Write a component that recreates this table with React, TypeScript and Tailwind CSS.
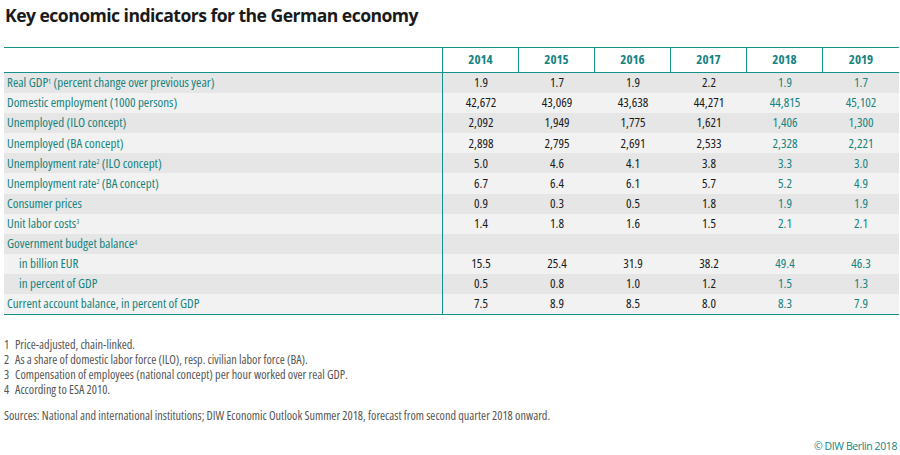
const rows: { label: React.ReactNode; values: string[]; indent?: boolean }[] = [
  { label: <>Real GDP<sup className="text-[7px]">1</sup> (percent change over previous year)</>, values: ['1.9', '1.7', '1.9', '2.2', '1.9', '1.7'] },
  { label: 'Domestic employment (1000 persons)', values: ['42,672', '43,069', '43,638', '44,271', '44,815', '45,102'] },
  { label: 'Unemployed (ILO concept)', values: ['2,092', '1,949', '1,775', '1,621', '1,406', '1,300'] },
  { label: 'Unemployed (BA concept)', values: ['2,898', '2,795', '2,691', '2,533', '2,328', '2,221'] },
  { label: <>Unemployment rate<sup className="text-[7px]">2</sup> (ILO concept)</>, values: ['5.0', '4.6', '4.1', '3.8', '3.3', '3.0'] },
  { label: <>Unemployment rate<sup className="text-[7px]">2</sup> (BA concept)</>, values: ['6.7', '6.4', '6.1', '5.7', '5.2', '4.9'] },
  { label: 'Consumer prices', values: ['0.9', '0.3', '0.5', '1.8', '1.9', '1.9'] },
  { label: <>Unit labor costs<sup className="text-[7px]">3</sup></>, values: ['1.4', '1.8', '1.6', '1.5', '2.1', '2.1'] },
  { label: <>Government budget balance<sup className="text-[7px]">4</sup></>, values: ['', '', '', '', '', ''] },
  { label: 'in billion EUR', values: ['15.5', '25.4', '31.9', '38.2', '49.4', '46.3'], indent: true },
  { label: 'in percent of GDP', values: ['0.5', '0.8', '1.0', '1.2', '1.5', '1.3'], indent: true },
  { label: 'Current account balance, in percent of GDP', values: ['7.5', '8.9', '8.5', '8.0', '8.3', '7.9'] },
];

const years = ['2014', '2015', '2016', '2017', '2018', '2019'];

const notes = [
  'Price-adjusted, chain-linked.',
  'As a share of domestic labor force (ILO), resp. civilian labor force (BA).',
  'Compensation of employees (national concept) per hour worked over real GDP.',
  'According to ESA 2010.',
];

export default function App() {
  return (
    <div className="w-[900px] h-[455px] bg-white overflow-hidden relative font-['Open_Sans',sans-serif] font-stretch-condensed">
      <h1 className="pl-[5px] pt-[3px] h-[47px] text-[17.6px] font-bold text-[#1a1a1a] leading-[24px] font-stretch-normal tracking-[-0.55px]">
        Key economic indicators for the German economy
      </h1>

      <div className="ml-[4px] w-[895px] border-t border-b border-[#14918a] text-[13px]">
        {/* Header */}
        <div className="flex h-[25px] border-b border-[#14918a]">
          <div className="w-[439px] border-r border-[#14918a]" />
          {years.map((y, i) => (
            <div
              key={y}
              className={`w-[76px] flex items-center justify-center font-bold text-[#15837f] ${i < 5 ? 'border-r border-[#14918a]' : ''}`}
            >
              {y}
            </div>
          ))}
        </div>

        {rows.map((r, ri) => (
          <div key={ri} className={`flex h-[20.1px] ${ri % 2 === 0 ? 'bg-[#e6e6e6]' : 'bg-[#f2f2f2]'}`}>
            <div className={`w-[439px] border-r border-[#14918a] flex items-center text-[#15837f] ${r.indent ? 'pl-[15px]' : 'pl-[3px]'}`}>
              <span>{r.label}</span>
            </div>
            {r.values.map((v, i) => (
              <div
                key={i}
                className={`w-[76px] flex items-center justify-center ${i >= 4 ? 'text-[#15837f]' : 'text-[#1a1a1a]'}`}
              >
                {v}
              </div>
            ))}
          </div>
        ))}
      </div>

      <div className="pl-[4px] pt-[22px] text-[12.2px] leading-[15px] text-[#555555]">
        {notes.map((n, i) => (
          <div key={i} className="flex">
            <span className="w-[11px] shrink-0">{i + 1}</span>
            <span>{n}</span>
          </div>
        ))}
        <div className="mt-[11px]">
          Sources: National and international institutions; DIW Economic Outlook Summer 2018, forecast from second quarter 2018 onward.
        </div>
      </div>

      <div className="absolute right-[3px] bottom-[0px] text-[10.5px] text-[#15837f] font-stretch-normal tracking-[-0.4px]">
        © DIW Berlin 2018
      </div>
    </div>
  );
}
